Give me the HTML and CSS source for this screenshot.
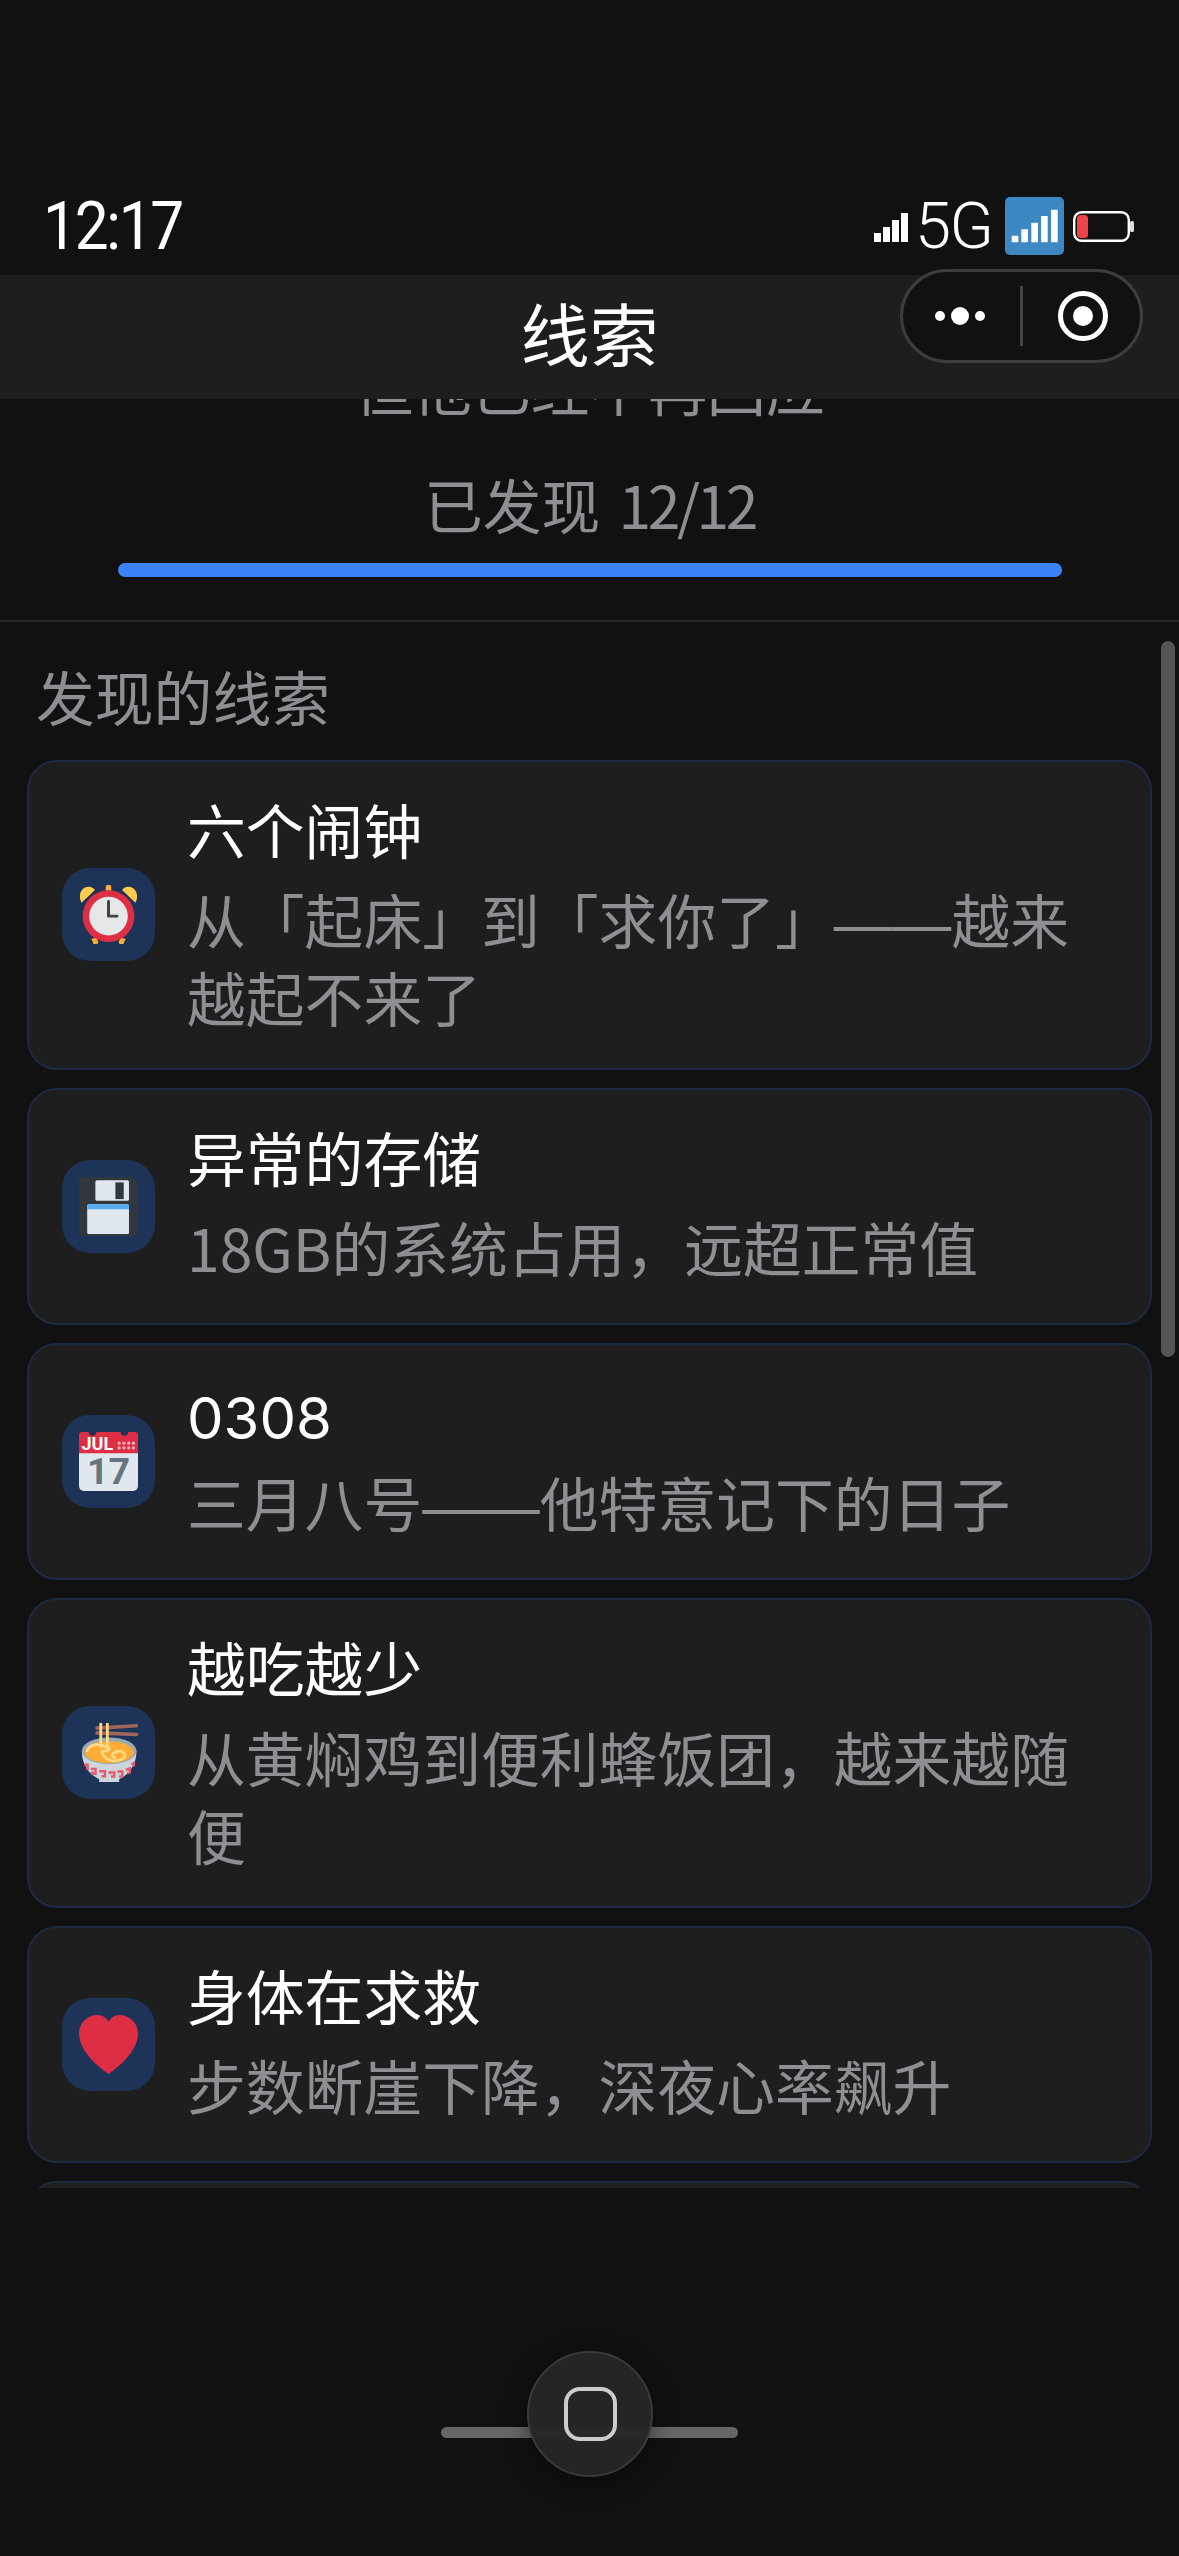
FILE: index.html
```html
<!DOCTYPE html>
<html lang="zh-CN">
<head>
<meta charset="utf-8">
<title>线索</title>
<link rel="stylesheet" href="styles.css">
</head>
<body>
<div class="phone">
  <header class="status-bar">
    <span class="time">12:17</span>
    <div class="status-icons">
      <svg class="sig" width="34" height="29" viewBox="0 0 34 29"><path fill="#fff" d="M0 20h7v9H0zM9 14h7v15H9zM18 7h7v22h-7zM27 0h7v29h-7z"/></svg>
      <span class="net">5G</span>
      <svg class="sig-box" width="59" height="58" viewBox="0 0 59 58"><rect width="59" height="58" rx="5" fill="#3d87c3"/><path fill="#fff" d="M6.7 38.7h6.6v6.6H6.700zM16.300 32.300h6.700v13h-6.700zM26.300 25.700h6.700v19.600h-6.700zM36 19h6.700v26.300H36zM46 12.700h6.700v32.600H46z"/></svg>
      <svg class="batt" width="61" height="31" viewBox="0 0 61 31"><rect x="1.200" y="1.200" width="54.600" height="28.600" rx="7.500" fill="none" stroke="#fff" stroke-width="2.400"/><rect x="4" y="4" width="11" height="23" rx="3.500" fill="#ef4444"/><rect x="57" y="10" width="4" height="11" rx="1.500" fill="#ddd"/></svg>
    </div>
  </header>

  <nav class="nav-bar">
    <h1 class="nav-title">线索</h1>
    <div class="capsule">
      <svg class="capsule-more" width="60" height="20" viewBox="0 0 60 20"><circle cx="10" cy="10" r="5" fill="#fff"/><circle cx="30" cy="10" r="9" fill="#fff"/><circle cx="50" cy="10" r="5" fill="#fff"/></svg>
      <span class="capsule-sep"></span>
      <svg class="capsule-close" width="50" height="50" viewBox="0 0 50 50"><circle cx="25" cy="25" r="22.500" fill="none" stroke="#fff" stroke-width="5"/><circle cx="25" cy="25" r="10" fill="#fff"/></svg>
    </div>
  </nav>

  <section class="summary">
    <p class="summary-quote">但他已经不再回应</p>
    <p class="summary-count">已发现 <span class="summary-num">12/12</span></p>
    <div class="progress"></div>
  </section>

  <main class="clues">
    <h2 class="clues-title">发现的线索</h2>
    <ul class="clue-list">
      <li class="card">
        <div class="icon">
          <svg width="59" height="59" viewBox="0 0 36 36">
            <path fill="#FFCC4D" d="M1.600 10.800C-.8 6.800 1 1 6 1c1.600 0 3 .8 3.700 2zM34.400 10.800C36.800 6.800 35 1 30 1c-1.600 0-3 .8-3.700 2z"/>
            <path fill="#FFAC33" d="M16.300 3.500V1.500a1.700 1.700 0 0 1 3.400 0v2zM7.500 33l3-1 1 2a1.600 1.600 0 1 1-3 1zM28.500 33l-3-1-1 2a1.600 1.600 0 1 0 3 1z"/>
            <circle cx="18" cy="19" r="15.800" fill="#DD2E44"/>
            <circle cx="18" cy="19" r="11.800" fill="#E6E7E8"/>
            <path fill="none" stroke="#414042" stroke-width="1.800" stroke-linecap="round" stroke-linejoin="round" d="M18 10v9h5.200"/>
          </svg>
        </div>
        <div class="body">
          <h3 class="name">六个闹钟</h3>
          <p class="desc">从「起床」到「求你了」<span class="dash">——</span>越来越起不来了</p>
        </div>
      </li>
      <li class="card">
        <div class="icon">
          <svg width="59" height="59" viewBox="0 0 36 36">
            <path fill="#31373D" d="M2 0h30l4 4v30a2 2 0 0 1-2 2H2a2 2 0 0 1-2-2V2a2 2 0 0 1 2-2z"/>
            <rect x="10" y="2" width="20.500" height="12.500" rx="1" fill="#E1E8ED"/>
            <rect x="22.200" y="3.300" width="5.100" height="10.200" fill="#31373D"/>
            <rect x="5" y="16.600" width="25.500" height="18.200" rx="1" fill="#E1E8ED"/>
            <path fill="#55ACEE" d="M6 16.600h23.500a1 1 0 0 1 1 1v2.100H5v-2.100a1 1 0 0 1 1-1z"/>
          </svg>
        </div>
        <div class="body">
          <h3 class="name">异常的存储</h3>
          <p class="desc">18GB的系统占用，远超正常值</p>
        </div>
      </li>
      <li class="card">
        <div class="icon">
          <svg width="59" height="59" viewBox="0 0 36 36">
            <path fill="#E1E8ED" d="M0 12h36v21a3 3 0 0 1-3 3H3a3 3 0 0 1-3-3z"/>
            <path fill="#DD2E44" d="M2 0h4a2.300 2.300 0 0 0 4.600 0h14.800a2.300 2.300 0 0 0 4.600 0h4a2 2 0 0 1 2 2v11H0V2a2 2 0 0 1 2-2z"/>
            <text class="cal-month" x="1.500" y="11">JUL</text>
            <g fill="#F4ABBA"><circle cx="24.500" cy="6.800" r="1"/><circle cx="27.400" cy="6.800" r="1"/><circle cx="30.300" cy="6.800" r="1"/><circle cx="33.200" cy="6.800" r="1"/><circle cx="24.500" cy="9.700" r="1"/><circle cx="27.400" cy="9.700" r="1"/><circle cx="30.300" cy="9.700" r="1"/><circle cx="33.200" cy="9.700" r="1"/></g>
            <text class="cal-day" x="18" y="32">17</text>
          </svg>
        </div>
        <div class="body">
          <h3 class="name name-num">0308</h3>
          <p class="desc">三月八号<span class="dash">——</span>他特意记下的日子</p>
        </div>
      </li>
      <li class="card">
        <div class="icon">
          <svg width="59" height="59" viewBox="0 0 36 36">
            <path fill="none" stroke="#A0665A" stroke-width="2.200" stroke-linecap="round" d="M11 3.100 35 1.700M11 6 35 7"/>
            <path fill="#CCD6DD" d="M1.700 17c0 8 4 14.500 10.600 17.300V36h12.200v-1.700C31 31.500 35.100 25 35.100 17z"/>
            <ellipse cx="18.400" cy="17" rx="16.700" ry="8.200" fill="#99AAB5"/>
            <ellipse cx="18.400" cy="17.800" rx="14.900" ry="6.700" fill="#FFAC33"/>
            <path fill="none" stroke="#FFD983" stroke-width="1.700" stroke-linecap="round" d="M13.300 .5v14M17.300 .2v14M5 17c1-3 5-4.500 8-3.500 4 1 6.500 2 5 3-2 1.500-6-1-3 3.500 3 4 9 3.800 12 1.500s-1-5-4-4-4 3-1 3.500"/>
            <g fill="none" stroke="#EA596E" stroke-width="1.500">
              <path d="M3.300 25.500h2v2.500h-1M7.300 28h2.800v3h-2v-1.500M12.300 29.500h3.500v3h-2M18 30.200h3.500v2.500h-2M23.400 29.600h3v3h-2M28.600 28.600l2.400-1v2.500l-1.500.7M32 25l1.500-.5v2"/>
            </g>
          </svg>
        </div>
        <div class="body">
          <h3 class="name">越吃越少</h3>
          <p class="desc">从黄焖鸡到便利蜂饭团，越来越随便</p>
        </div>
      </li>
      <li class="card">
        <div class="icon">
          <svg width="59" height="59" viewBox="0 0 36 36"><path fill="#DD2E44" d="M36 11.300C36 5 30.900 0 24.700 0 20.900 0 19.800 1.900 18 4 16.200 1.900 15.100 0 11.300 0 5.100 0 0 5 0 11.300c0 .9.100 1.800.3 2.600C2 24.400 14 33.300 18 36c4-2.700 16-11.600 17.700-22.100.2-.8.300-1.700.3-2.600z"/></svg>
        </div>
        <div class="body">
          <h3 class="name">身体在求救</h3>
          <p class="desc">步数断崖下降，深夜心率飙升</p>
        </div>
      </li>
      <li class="card">
        <div class="icon"></div>
        <div class="body">
          <h3 class="name"></h3>
          <p class="desc"></p>
        </div>
      </li>
    </ul>
    <div class="scrollbar"></div>
  </main>

  <footer class="dock">
    <div class="dock-bar"></div>
    <button class="home" type="button" aria-label="主页"><span class="home-glyph"></span></button>
  </footer>
</div>
</body>
</html>
```
FILE: styles.css
```css
* { box-sizing: border-box; margin: 0; padding: 0; }
html, body { height: 100%; background: #111; }
body {
  font-family: "Noto Sans CJK SC", "Noto Sans", sans-serif;
  color: #fff;
  overflow: hidden;
}
.phone {
  width: 1179px;
  height: 2556px;
  display: flex;
  flex-direction: column;
  background: #111;
  overflow: hidden;
}

/* status bar */
.status-bar {
  flex: none;
  height: 275px;
  padding: 177px 45px 0 43px;
  display: flex;
  align-items: center;
  justify-content: space-between;
}
.time {
  font-family: Roboto, sans-serif;
  font-size: 67px;
  font-weight: 400;
  letter-spacing: -2.500px;
  line-height: 1;
  transform: scaleX(.9);
  transform-origin: left center;
}
.status-icons { display: flex; align-items: center; }
.sig { margin-top: 3px; }
.net {
  font-family: Roboto, sans-serif;
  font-weight: 300;
  font-size: 65px;
  line-height: 1;
  margin-left: 7px;
  letter-spacing: -1.500px;
  width: 78px;
}
.sig-box { margin-left: 12px; }
.batt { margin-left: 9px; }

/* nav */
.nav-bar {
  flex: none;
  position: relative;
  z-index: 2;
  height: 124px;
  background: #1e1e1e;
  display: flex;
  align-items: center;
  justify-content: center;
}
.nav-title {
  font-size: 69px;
  font-weight: 400;
  line-height: 1;
  margin-top: -9px;
}
.capsule {
  position: absolute;
  top: -6px;
  right: 36px;
  width: 243px;
  height: 94px;
  border: 3px solid #3d3d3d;
  border-radius: 47px;
  background: #111;
  display: grid;
  grid-template-columns: 1fr 3px 1fr;
  align-items: center;
  justify-items: center;
}
.capsule-more { margin-right: 4px; }
.capsule-close { margin-left: 3px; }
.capsule-sep { width: 3px; height: 60px; background: #444; }

/* summary */
.summary {
  flex: none;
  height: 223px;
  overflow: hidden;
  border-bottom: 2px solid #2a2a2a;
  text-align: center;
  color: #8e8e93;
  font-size: 58.800px;
  line-height: 76px;
}
.summary-quote { margin-top: -51px; }
.summary-count { margin-top: 42px; }
.summary-num { letter-spacing: -3.400px; margin-left: 5px; }
.progress {
  height: 14px;
  margin: 21px 117px 0 118px;
  border-radius: 7px;
  background: #3b82f6;
}

/* clue list */
.clues {
  flex: none;
  position: relative;
  height: 1566px;
  overflow: hidden;
  padding: 36px 27px 0;
}
.clues-title {
  font-size: 58.800px;
  font-weight: 400;
  line-height: 76px;
  color: #8e8e93;
  padding-left: 9px;
  margin-bottom: 26px;
}
.clue-list {
  list-style: none;
  display: flex;
  flex-direction: column;
  gap: 18px;
}
.card {
  min-height: 237px;
  padding: 31px 40px 32px 33px;
  border: 2px solid #1c2a42;
  border-radius: 30px;
  background: #1e1e1e;
  display: flex;
  align-items: center;
  gap: 32px;
}
.icon {
  flex: none;
  width: 93px;
  height: 93px;
  border-radius: 28px;
  background: #1e3358;
  display: flex;
  align-items: center;
  justify-content: center;
}
.body { flex: 1; min-width: 0; align-self: flex-start; }
.name {
  font-size: 58.800px;
  font-weight: 400;
  line-height: 72px;
  margin-bottom: 15px;
  color: #fff;
}
.name-num {
  font-family: Inter, sans-serif;
  font-size: 58px;
  padding-top: 6px;
  margin-bottom: 9px;
}
.desc {
  font-size: 58.800px;
  line-height: 78px;
  color: #8e8e93;
}
.dash { font-family: "Liberation Sans", sans-serif; line-height: 0; }
.cal-month {
  font-family: Roboto, sans-serif;
  font-weight: 700;
  font-size: 11px;
  fill: #fff;
}
.cal-day {
  font-family: Roboto, sans-serif;
  font-weight: 700;
  font-size: 23px;
  fill: #66757F;
  text-anchor: middle;
}
.scrollbar {
  position: absolute;
  top: 19px;
  right: 4px;
  width: 14px;
  height: 716px;
  border-radius: 7px;
  background: #555;
}

/* dock */
.dock {
  flex: 1;
  display: flex;
  justify-content: center;
  position: relative;
}
.dock-bar {
  margin-top: 239px;
  width: 297px;
  height: 11px;
  border-radius: 6px;
  background: #666;
}
.home {
  position: absolute;
  top: 163px;
  left: 527px;
  width: 126px;
  height: 126px;
  border-radius: 50%;
  border: 2px solid #3a3a3c;
  background: rgba(38, 38, 38, .97);
  box-shadow: 0 6px 24px rgba(0, 0, 0, .45);
  display: flex;
  align-items: center;
  justify-content: center;
}
.home-glyph {
  width: 53px;
  height: 54px;
  border: 4.500px solid #ccc;
  border-radius: 16px;
}
```
